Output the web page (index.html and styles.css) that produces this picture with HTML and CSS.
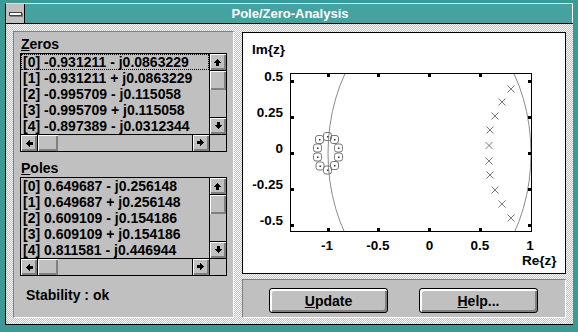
FILE: index.html
```html
<!DOCTYPE html>
<html>
<head>
<meta charset="utf-8">
<title>Pole/Zero-Analysis</title>
<link rel="stylesheet" href="styles.css">
</head>
<body>
<div class="window">
  <div class="frame">
    <div class="titlebar">
      <div class="sysmenu"><span class="sysbar"></span></div>
      <div class="title">Pole/Zero-Analysis</div>
    </div>
    <div class="client">
      <div class="leftpanel">
        <div class="label"><u>Z</u>eros</div>
        <div class="listbox">
          <div class="listmain">
            <div class="items">
              <div class="item focus">[0] -0.931211 - j0.0863229</div>
              <div class="item">[1] -0.931211 + j0.0863229</div>
              <div class="item">[2] -0.995709 - j0.115058</div>
              <div class="item">[3] -0.995709 + j0.115058</div>
              <div class="item">[4] -0.897389 - j0.0312344</div>
            </div>
            <div class="vscroll">
              <div class="sbtn up"><svg width="16" height="16" viewBox="0 0 16 16"><path d="M7 5h1v1h1v1h1v1h1v1h-2v3h-3v-3h-2v-1h1v-1h1v-1h1z"/></svg></div>
              <div class="vtrack"><div class="vthumb"></div></div>
              <div class="sbtn down"><svg class="rot180" width="16" height="16" viewBox="0 0 16 16"><path d="M7 5h1v1h1v1h1v1h1v1h-2v3h-3v-3h-2v-1h1v-1h1v-1h1z"/></svg></div>
            </div>
          </div>
          <div class="hscroll">
            <div class="sbtn left"><svg class="rot270" width="16" height="16" viewBox="0 0 16 16"><path d="M7 5h1v1h1v1h1v1h1v1h-2v3h-3v-3h-2v-1h1v-1h1v-1h1z"/></svg></div>
            <div class="htrack"><div class="hthumb"></div></div>
            <div class="sbtn right"><svg class="rot90" width="16" height="16" viewBox="0 0 16 16"><path d="M7 5h1v1h1v1h1v1h1v1h-2v3h-3v-3h-2v-1h1v-1h1v-1h1z"/></svg></div>
            <div class="corner"></div>
          </div>
        </div>

        <div class="label poles"><u>P</u>oles</div>
        <div class="listbox">
          <div class="listmain">
            <div class="items">
              <div class="item">[0] 0.649687 - j0.256148</div>
              <div class="item">[1] 0.649687 + j0.256148</div>
              <div class="item">[2] 0.609109 - j0.154186</div>
              <div class="item">[3] 0.609109 + j0.154186</div>
              <div class="item">[4] 0.811581 - j0.446944</div>
            </div>
            <div class="vscroll">
              <div class="sbtn up"><svg width="16" height="16" viewBox="0 0 16 16"><path d="M7 5h1v1h1v1h1v1h1v1h-2v3h-3v-3h-2v-1h1v-1h1v-1h1z"/></svg></div>
              <div class="vtrack"><div class="vthumb"></div></div>
              <div class="sbtn down"><svg class="rot180" width="16" height="16" viewBox="0 0 16 16"><path d="M7 5h1v1h1v1h1v1h1v1h-2v3h-3v-3h-2v-1h1v-1h1v-1h1z"/></svg></div>
            </div>
          </div>
          <div class="hscroll">
            <div class="sbtn left"><svg class="rot270" width="16" height="16" viewBox="0 0 16 16"><path d="M7 5h1v1h1v1h1v1h1v1h-2v3h-3v-3h-2v-1h1v-1h1v-1h1z"/></svg></div>
            <div class="htrack"><div class="hthumb"></div></div>
            <div class="sbtn right"><svg class="rot90" width="16" height="16" viewBox="0 0 16 16"><path d="M7 5h1v1h1v1h1v1h1v1h-2v3h-3v-3h-2v-1h1v-1h1v-1h1z"/></svg></div>
            <div class="corner"></div>
          </div>
        </div>

        <div class="stability">Stability : ok</div>
      </div>

      <div class="rightcol">
        <div class="plot">
          <svg class="plotsvg" width="322" height="240" viewBox="243 33 322 240">
            <defs><clipPath id="pc"><rect x="291" y="74" width="240" height="157"/></clipPath></defs>
            <text x="252" y="54">Im{z}</text>
            <g text-anchor="end">
              <text x="283" y="81">0.5</text>
              <text x="283" y="117">0.25</text>
              <text x="283" y="153">0</text>
              <text x="283" y="189">-0.25</text>
              <text x="283" y="225">-0.5</text>
            </g>
            <g text-anchor="middle">
              <text x="327" y="250">-1</text>
              <text x="378" y="250">-0.5</text>
              <text x="429.5" y="250">0</text>
              <text x="480" y="250">0.5</text>
              <text x="530" y="250">1</text>
            </g>
            <text x="522" y="265">Re{z}</text>
            <ellipse cx="429.5" cy="153.5" rx="101.5" ry="144" fill="none" stroke="#8a8a8a" stroke-width="1" clip-path="url(#pc)"/>
            <rect x="290.5" y="73.5" width="241" height="158" fill="none" stroke="#000" stroke-width="1"/>
            <g fill="#000">
              <rect x="327" y="74" width="3" height="3"/>
              <rect x="377" y="74" width="3" height="3"/>
              <rect x="428" y="74" width="3" height="3"/>
              <rect x="479" y="74" width="3" height="3"/>
              <rect x="327" y="228" width="3" height="3"/>
              <rect x="377" y="228" width="3" height="3"/>
              <rect x="428" y="228" width="3" height="3"/>
              <rect x="479" y="228" width="3" height="3"/>
              <rect x="291" y="80" width="3" height="3"/>
              <rect x="291" y="116" width="3" height="3"/>
              <rect x="291" y="152" width="3" height="3"/>
              <rect x="291" y="188" width="3" height="3"/>
              <rect x="291" y="224" width="3" height="3"/>
              <rect x="528" y="80" width="3" height="3"/>
              <rect x="528" y="116" width="3" height="3"/>
              <rect x="528" y="152" width="3" height="3"/>
              <rect x="528" y="188" width="3" height="3"/>
              <rect x="528" y="224" width="3" height="3"/>
            </g>
            <g class="zeros" fill="none" stroke="#777" stroke-width="1">
              <rect x="323.5" y="132.5" width="8" height="8" rx="2.5"/>
              <rect x="315.5" y="135.5" width="8" height="8" rx="2.5"/>
              <rect x="330.5" y="135.5" width="8" height="8" rx="2.5"/>
              <rect x="313.5" y="144" width="8" height="8" rx="2.5"/>
              <rect x="334.5" y="144" width="8" height="8" rx="2.5"/>
              <rect x="313.5" y="153" width="8" height="8" rx="2.5"/>
              <rect x="334.5" y="153" width="8" height="8" rx="2.5"/>
              <rect x="316" y="162" width="8" height="8" rx="2.5"/>
              <rect x="330.5" y="161.5" width="8" height="8" rx="2.5"/>
              <rect x="323.5" y="166" width="8" height="8" rx="2.5"/>
            </g>
            <g fill="#333">
              <rect x="327" y="136" width="1.5" height="1.5"/>
              <rect x="319" y="139" width="1.5" height="1.5"/>
              <rect x="334" y="139" width="1.5" height="1.5"/>
              <rect x="317" y="147.5" width="1.5" height="1.5"/>
              <rect x="338" y="147.5" width="1.5" height="1.5"/>
              <rect x="317" y="156.5" width="1.5" height="1.5"/>
              <rect x="338" y="156.5" width="1.5" height="1.5"/>
              <rect x="319.5" y="165.5" width="1.5" height="1.5"/>
              <rect x="334" y="165" width="1.5" height="1.5"/>
              <rect x="327" y="169.5" width="1.5" height="1.5"/>
            </g>
            <g class="poles" stroke="#7a7a7a" stroke-width="1" fill="none">
              <path d="M507.5 85.5l7 7M514.5 85.5l-7 7"/>
              <path d="M498.5 98.5l7 7M505.5 98.5l-7 7"/>
              <path d="M491.5 112.5l7 7M498.5 112.5l-7 7"/>
              <path d="M486.5 126.5l7 7M493.5 126.5l-7 7"/>
              <path d="M485.5 142l7 7M492.5 142l-7 7"/>
              <path d="M485.5 157.5l7 7M492.5 157.5l-7 7"/>
              <path d="M486.5 171.5l7 7M493.5 171.5l-7 7"/>
              <path d="M491.5 186.5l7 7M498.5 186.5l-7 7"/>
              <path d="M498.5 200.5l7 7M505.5 200.5l-7 7"/>
              <path d="M507.5 214.5l7 7M514.5 214.5l-7 7"/>
            </g>
          </svg>
        </div>
        <div class="buttons">
          <button class="btn"><u>U</u>pdate</button>
          <button class="btn"><u>H</u>elp...</button>
        </div>
      </div>
    </div>
  </div>
</div>
</body>
</html>
```

FILE: styles.css
```css
* { box-sizing: border-box; }
html, body { margin: 0; padding: 0; }
body {
  width: 578px;
  height: 332px;
  overflow: hidden;
  font-family: "Liberation Sans", Arial, sans-serif;
  font-weight: bold;
  font-size: 14px;
  color: #000;
  background: #3c9a96;
}
.window {
  width: 578px;
  height: 332px;
  background: #3c9a96;
  padding: 3px 5px 7px 5px;
}
.frame {
  height: 100%;
  border: 1px solid #000;
  border-top-color: #cfe6e4;
  border-right: 0;
  display: flex;
  flex-direction: column;
}
.titlebar {
  height: 20px;
  flex: none;
  display: flex;
  border-bottom: 1px solid #000;
}
.sysmenu {
  width: 19px;
  background: #c0c0c0;
  border-right: 1px solid #000;
  display: flex;
  align-items: center;
  justify-content: center;
}
.sysbar {
  display: block;
  width: 13px;
  height: 4px;
  background: #fff;
  border: 1px solid #404040;
  box-shadow: 1px 1px 0 #808080;
}
.title {
  flex: 1;
  background: #44a3a1;
  color: #fff;
  font-size: 13px;
  line-height: 19px;
  text-align: center;
  padding-right: 17px;
  border-right: 1px solid #fff;
}
.client {
  flex: 1;
  display: flex;
  gap: 8px;
  padding: 7px 7px 6px 7px;
  background: repeating-conic-gradient(#c0c0c0 0 25%, #ffffff 0 50%) 0 0 / 2px 2px;
}
.leftpanel {
  width: 221px;
  flex: none;
  background: #c0c0c0;
  border: 1px solid;
  border-color: #808080 #fff #fff #808080;
  padding: 4px 6px 0 6px;
}
.label {
  height: 16px;
  line-height: 16px;
  padding-left: 1px;
  margin-bottom: 1px;
}
.label.poles {
  margin-top: 8px;
}
.listbox {
  width: 207px;
  border: 1px solid #000;
  background: #c0c0c0;
}
.listmain {
  display: flex;
  height: 80px;
}
.items {
  width: 188px;
  overflow: hidden;
}
.item {
  height: 16px;
  line-height: 16px;
  padding-left: 2px;
  white-space: nowrap;
}
.item.focus {
  outline: 1px dotted #000;
  outline-offset: -1px;
}
.vscroll {
  width: 17px;
  border-left: 1px solid #000;
  display: flex;
  flex-direction: column;
}
.sbtn {
  width: 16px;
  height: 16px;
  flex: none;
  background: #c0c0c0;
  box-shadow: inset 1px 1px 0 #fff, inset -1px -1px 0 #808080, inset -2px -2px 0 #808080;
}
.sbtn svg { display: block; fill: #000; shape-rendering: crispEdges; }
.sbtn.up { height: 17px; border-bottom: 1px solid #000; }
.sbtn.down { height: 17px; border-top: 1px solid #000; }
.sbtn.left { width: 17px; border-right: 1px solid #000; }
.sbtn.right { width: 17px; border-left: 1px solid #000; }
.rot90 { transform: rotate(90deg); }
.rot180 { transform: rotate(180deg); }
.rot270 { transform: rotate(270deg); }
.vtrack { flex: 1; }
.vthumb {
  height: 19px;
  background: #c0c0c0;
  box-shadow: inset 1px 1px 0 #fff, inset -1px -1px 0 #808080, inset -2px -2px 0 #808080;
}
.hscroll {
  height: 17px;
  border-top: 1px solid #000;
  display: flex;
}
.htrack { flex: 1; }
.hthumb {
  width: 20px;
  height: 16px;
  background: #c0c0c0;
  box-shadow: inset 1px 1px 0 #fff, inset -1px -1px 0 #808080, inset -2px -2px 0 #808080;
}
.corner {
  width: 17px;
  border-left: 1px solid #000;
  background: #c0c0c0;
}
.stability {
  margin-top: 11px;
  padding-left: 6px;
  line-height: 16px;
}
.rightcol {
  flex: 1;
  display: flex;
  flex-direction: column;
  gap: 5px;
  padding-top: 1px;
}
.plot {
  height: 242px;
  background: #fff;
  border: 1px solid #000;
}
.plotsvg { display: block; }
.plotsvg text {
  font-family: "Liberation Sans", Arial, sans-serif;
  font-weight: bold;
  font-size: 13.5px;
  fill: #000;
}
.buttons {
  height: 39px;
  background: #c0c0c0;
  border: 1px solid;
  border-color: #808080 #fff #fff #808080;
  display: flex;
  align-items: flex-start;
  gap: 31px;
  padding: 8px 0 0 26px;
}
.btn {
  width: 119px;
  height: 25px;
  padding: 0;
  margin: 0;
  border: 1px solid #000;
  border-radius: 3px;
  background: #c0c0c0;
  box-shadow: inset 1px 1px 0 #fff, inset 2px 2px 0 #fff, inset -1px -1px 0 #808080, inset -2px -2px 0 #808080;
  font-family: "Liberation Sans", Arial, sans-serif;
  font-weight: bold;
  font-size: 14px;
  line-height: 16px;
  color: #000;
}
```
